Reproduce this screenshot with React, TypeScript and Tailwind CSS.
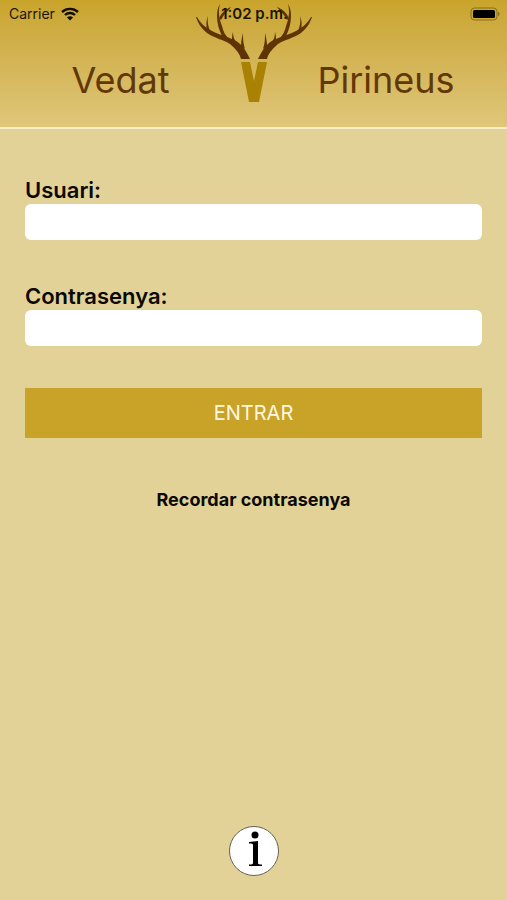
import React from "react";
import clsx from "clsx";

const Antler: React.FC = () => (
  <g fill="#5f3404">
    {/* main beam */}
    <path d="M1 17C5 24 10 28 18 32C27 36 37 38 43 43C48 47 51 53 54 59L45 59C44 54 40 49 34 44C28 40 18 38 11 33C5 28 2 23 0 17Z" />
    {/* tall tine with its small fork */}
    <path d="M24 4C22 11 23 19 26 26C27 31 29 35 33 39L26 36C23 30 21 23 21 16C21 11 22 7 24 4Z" />
    <path d="M35 7C32 11 28 14 25 20L23 18C26 12 30 9 35 7Z" />
    {/* short tines */}
    <path d="M12 16C11 21 12 26 14 31L11 30C10 25 10 21 12 16Z" />
    <path d="M37 32C37 36 38 40 41 43L36 41C36 38 36 35 37 32Z" />
    <path d="M47 33C47 38 47 43 49 49L45 46C45 41 46 37 47 33Z" />
  </g>
);

const Logo: React.FC = () => (
  <svg
    viewBox="0 0 116 127"
    className="h-[127px] w-[116px] shrink-0"
    role="img"
    aria-label="Vedat Pirineus"
  >
    <Antler />
    <g transform="translate(116 0) scale(-1 1)">
      <Antler />
    </g>
    <path fill="#aa8203" d="M45 62H54L58 81L62 62H71L63 102H53Z" />
  </svg>
);

const StatusBar: React.FC = () => (
  <div
    className={clsx(
      "absolute inset-x-0 top-0 h-7 pl-[9px] pr-[7px]",
      "grid grid-cols-[1fr_auto_1fr] items-center",
      "text-sm text-[#1b1503]",
    )}
  >
    <div className="flex items-center gap-[6px]">
      <span>Carrier</span>
      <svg viewBox="0 0 18 14" className="h-[14px] w-[18px]" fill="none" stroke="#120e02">
        <path d="M1 5C5.500 .8 12.500 .8 17 5" strokeWidth="2.400" />
        <path d="M4 8C6.800 5.300 11.200 5.300 14 8" strokeWidth="2.400" />
        <path d="M9 13.500L6 10.400C7.700 8.900 10.300 8.900 12 10.400Z" fill="#120e02" stroke="none" />
      </svg>
    </div>
    <span className="text-[15px] font-semibold">1:02 p.m.</span>
    <svg viewBox="0 0 30 14" className="h-[14px] w-[30px] justify-self-end">
      <rect x="1" y="1" width="26" height="12" rx="3.500" fill="none" stroke="#87701f" />
      <rect x="3" y="3" width="22" height="8" rx="1.500" fill="#000" />
      <path d="M28 5C30 5.500 30 8.500 28 9Z" fill="#87701f" />
    </svg>
  </div>
);

const Header: React.FC = () => (
  <header
    className={clsx(
      "relative border-b-2 border-[#f8edcb]",
      "bg-gradient-to-b from-[#c9a42a] to-[#dfc679]",
    )}
  >
    <div className="grid grid-cols-[1fr_auto_1fr] items-center text-4xl text-[#623806]">
      <span className="pt-8 pr-[26px] text-right">Vedat</span>
      <Logo />
      <span className="pt-8 pl-[6px]">Pirineus</span>
    </div>
    <StatusBar />
  </header>
);

interface FieldProps {
  id: string;
  label: string;
  type: string;
}

const Field: React.FC<FieldProps> = ({ id, label, type }) => (
  <div className="mb-[42px]">
    <label htmlFor={id} className="block text-[22px] leading-7 font-semibold">
      {label}
    </label>
    <input
      id={id}
      type={type}
      className="block h-9 w-full rounded-md bg-white px-3 text-lg outline-none"
    />
  </div>
);

export default function App() {
  return (
    <div className="flex min-h-screen flex-col bg-[#e2d298] font-['Inter',sans-serif] text-[#0b0903]">
      <Header />

      <main className="flex flex-1 flex-col px-[25px] pt-[47px] pb-6">
        <form onSubmit={(e) => e.preventDefault()}>
          <Field id="usuari" label="Usuari:" type="text" />
          <Field id="contrasenya" label="Contrasenya:" type="password" />
          <button
            type="submit"
            className="block h-[50px] w-full bg-[#c9a228] text-xl text-[#fff8e0]"
          >
            ENTRAR
          </button>
        </form>

        <a href="#recordar" className="mt-12 self-center text-lg font-bold">
          Recordar contrasenya
        </a>

        <button
          type="button"
          aria-label="Informació"
          className="mt-auto size-[50px] self-center rounded-full border border-[#66604f] bg-white"
        >
          <svg viewBox="0 0 48 48" className="size-12" fill="#000">
            <circle cx="25" cy="8" r="3.500" />
            <path d="M19 15L28 14V36C28 37 29 37.500 32 37.500V39H19V37.500C22 37.500 23 37 23 36V18C23 16.500 22 16.500 19 16.500Z" />
          </svg>
        </button>
      </main>
    </div>
  );
}
